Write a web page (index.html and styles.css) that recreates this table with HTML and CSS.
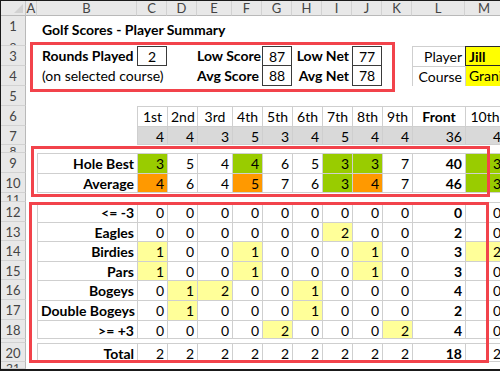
FILE: index.html
```html
<!DOCTYPE html>
<html>
<head>
<meta charset="utf-8">
<title>Golf Scores - Player Summary</title>
<link rel="stylesheet" href="styles.css">
</head>
<body>
<div class="frame">
  <div class="row hdr">
    <div class="corner"></div>
    <div class="ch">A</div><div class="ch">B</div><div class="ch">C</div><div class="ch">D</div><div class="ch">E</div><div class="ch">F</div><div class="ch">G</div><div class="ch">H</div><div class="ch">I</div><div class="ch">J</div><div class="ch">K</div><div class="ch">L</div><div class="ch">M</div>
  </div>

  <div class="row h25">
    <div class="rh">1</div><div></div>
    <div class="c bold title">Golf Scores - Player Summary</div>
  </div>
  <div class="row h5"><div class="rh thin">2</div></div>

  <div class="row h20">
    <div class="rh">3</div><div></div>
    <div class="c bold lft">Rounds Played</div>
    <div class="c ctr box">2</div>
    <div></div>
    <div class="c r bold span2">Low Score</div>
    <div class="c ctr box">87</div>
    <div class="c r bold span2">Low Net</div>
    <div class="c ctr box">77</div>
    <div></div>
    <div class="c r lb">Player</div>
    <div class="c bold jill">Jill</div>
  </div>
  <div class="row h20">
    <div class="rh">4</div><div></div>
    <div class="c lft span2">(on selected course)</div>
    <div></div>
    <div class="c r bold span2">Avg Score</div>
    <div class="c ctr box box2">88</div>
    <div class="c r bold span2">Avg Net</div>
    <div class="c ctr box box2">78</div>
    <div></div>
    <div class="c r lb">Course</div>
    <div class="c course">Granite Ridge</div>
  </div>
  <div class="row h20"><div class="rh">5</div></div>

  <div class="row h20">
    <div class="rh">6</div><div></div><div></div>
    <div class="c ctr b">1st</div><div class="c ctr b">2nd</div><div class="c ctr b">3rd</div><div class="c ctr b">4th</div><div class="c ctr b">5th</div><div class="c ctr b">6th</div><div class="c ctr b">7th</div><div class="c ctr b">8th</div><div class="c ctr b">9th</div><div class="c ctr b bold">Front</div><div class="c ctr b">10th</div>
  </div>
  <div class="row h19">
    <div class="rh">7</div><div></div><div></div>
    <div class="c r b bb p">4</div><div class="c r b bb p">4</div><div class="c r b bb p">3</div><div class="c r b bb p">5</div><div class="c r b bb p">3</div><div class="c r b bb p">4</div><div class="c r b bb p">5</div><div class="c r b bb p">4</div><div class="c r b bb p">4</div><div class="c r b bb p">36</div><div class="c r b bb p">4</div>
  </div>
  <div class="row h8"><div class="rh thin">8</div></div>

  <div class="row h20">
    <div class="rh">9</div><div></div>
    <div class="c r b bold">Hole Best</div>
    <div class="c r b g">3</div><div class="c r b">5</div><div class="c r b">4</div><div class="c r b g">4</div><div class="c r b">6</div><div class="c r b">5</div><div class="c r b g">3</div><div class="c r b g">3</div><div class="c r b">7</div><div class="c r b bold">40</div><div class="c r b g">3</div>
  </div>
  <div class="row h20">
    <div class="rh">10</div><div></div>
    <div class="c r b bb bold">Average</div>
    <div class="c r b bb o">4</div><div class="c r b bb">6</div><div class="c r b bb">4</div><div class="c r b bb o">5</div><div class="c r b bb">7</div><div class="c r b bb">6</div><div class="c r b bb g">3</div><div class="c r b bb o">4</div><div class="c r b bb">7</div><div class="c r b bb bold">46</div><div class="c r b bb g">3</div>
  </div>
  <div class="row h9"><div class="rh thin">11</div></div>

  <div class="row h20">
    <div class="rh">12</div><div></div>
    <div class="c r b bold">&lt;= -3</div>
    <div class="c r b">0</div><div class="c r b">0</div><div class="c r b">0</div><div class="c r b">0</div><div class="c r b">0</div><div class="c r b">0</div><div class="c r b">0</div><div class="c r b">0</div><div class="c r b">0</div><div class="c r b bold">0</div><div class="c r b">0</div>
  </div>
  <div class="row h19">
    <div class="rh">13</div><div></div>
    <div class="c r b bold">Eagles</div>
    <div class="c r b">0</div><div class="c r b">0</div><div class="c r b">0</div><div class="c r b">0</div><div class="c r b">0</div><div class="c r b">0</div><div class="c r b y">2</div><div class="c r b">0</div><div class="c r b">0</div><div class="c r b bold">2</div><div class="c r b">0</div>
  </div>
  <div class="row h20">
    <div class="rh">14</div><div></div>
    <div class="c r b bold">Birdies</div>
    <div class="c r b y">1</div><div class="c r b">0</div><div class="c r b">0</div><div class="c r b y">1</div><div class="c r b">0</div><div class="c r b">0</div><div class="c r b">0</div><div class="c r b y">1</div><div class="c r b">0</div><div class="c r b bold">3</div><div class="c r b y">2</div>
  </div>
  <div class="row h19">
    <div class="rh">15</div><div></div>
    <div class="c r b bold">Pars</div>
    <div class="c r b y">1</div><div class="c r b">0</div><div class="c r b">0</div><div class="c r b y">1</div><div class="c r b">0</div><div class="c r b">0</div><div class="c r b">0</div><div class="c r b y">1</div><div class="c r b">0</div><div class="c r b bold">3</div><div class="c r b">0</div>
  </div>
  <div class="row h20">
    <div class="rh">16</div><div></div>
    <div class="c r b bold">Bogeys</div>
    <div class="c r b">0</div><div class="c r b y">1</div><div class="c r b y">2</div><div class="c r b">0</div><div class="c r b">0</div><div class="c r b y">1</div><div class="c r b">0</div><div class="c r b">0</div><div class="c r b">0</div><div class="c r b bold">4</div><div class="c r b">0</div>
  </div>
  <div class="row h20">
    <div class="rh">17</div><div></div>
    <div class="c r b bold">Double Bogeys</div>
    <div class="c r b">0</div><div class="c r b y">1</div><div class="c r b">0</div><div class="c r b">0</div><div class="c r b">0</div><div class="c r b y">1</div><div class="c r b">0</div><div class="c r b">0</div><div class="c r b">0</div><div class="c r b bold">2</div><div class="c r b">0</div>
  </div>
  <div class="row h19">
    <div class="rh">18</div><div></div>
    <div class="c r b bb bold">&gt;= +3</div>
    <div class="c r b bb">0</div><div class="c r b bb">0</div><div class="c r b bb">0</div><div class="c r b bb">0</div><div class="c r b bb y">2</div><div class="c r b bb">0</div><div class="c r b bb">0</div><div class="c r b bb">0</div><div class="c r b bb y">2</div><div class="c r b bb bold">4</div><div class="c r b bb">0</div>
  </div>
  <div class="row h4"><div class="rh thin"></div></div>
  <div class="row h19">
    <div class="rh">20</div><div></div>
    <div class="c r b bb bold">Total</div>
    <div class="c r b bb">2</div><div class="c r b bb">2</div><div class="c r b bb">2</div><div class="c r b bb">2</div><div class="c r b bb">2</div><div class="c r b bb">2</div><div class="c r b bb">2</div><div class="c r b bb">2</div><div class="c r b bb">2</div><div class="c r b bb bold">18</div><div class="c r b bb">2</div>
  </div>
  <div class="row h7"><div class="rh thin">21</div></div>

  <div class="redbox rb1"></div>
  <div class="redbox rb2"></div>
  <div class="redbox rb3"></div>
</div>
</body>
</html>
```
FILE: styles.css
```css
html, body {
  margin: 0;
  padding: 0;
  background: #ffffff;
  overflow: hidden;
}

body {
  font-family: Lato, "Liberation Sans", sans-serif;
  font-size: 14px;
  color: #000;
}

.frame {
  position: relative;
  width: 499px;
  height: 368px;
  border-top: 1px solid #1a1a1a;
  border-left: 1px solid #1a1a1a;
  border-bottom: 2px solid #1a1a1a;
  overflow: hidden;
}

.row {
  display: grid;
  grid-template-columns: 25px 11px 100px 30px 30px 35px 30px 30px 30px 30px 30px 30px 53px 39px;
  overflow: hidden;
}

.hdr { height: 15px; }
.h25 { height: 25px; line-height: 25px; }
.h20 { height: 20px; line-height: 20px; }
.h19 { height: 19px; line-height: 19px; }
.h9 { height: 9px; }
.h8 { height: 8px; }
.h7 { height: 7px; }
.h5 { height: 5px; }
.h4 { height: 4px; }

.corner {
  position: relative;
  background: #e8e8e8;
  border-right: 1px solid #c6c6c6;
  border-bottom: 1px solid #b9b9b9;
}
.corner::after {
  content: "";
  position: absolute;
  right: 2px;
  bottom: 2px;
  border-left: 9px solid transparent;
  border-bottom: 9px solid #d2d2d2;
}

.ch {
  background: #e8e8e8;
  border-right: 1px solid #d2d2d2;
  border-bottom: 1px solid #b9b9b9;
  text-align: center;
  font-size: 13px;
  line-height: 15px;
  color: #444;
  overflow: hidden;
}

.rh {
  box-sizing: border-box;
  height: 100%;
  background: #e8e8e8;
  border-right: 1px solid #b9b9b9;
  border-bottom: 1px solid #d2d2d2;
  text-align: center;
  font-size: 13px;
  line-height: 20px;
  color: #444;
  overflow: hidden;
}
.rh.thin {
  line-height: 10px;
  font-size: 12px;
  padding-top: 1px;
}

.c {
  box-sizing: border-box;
  padding: 0 3px;
  white-space: nowrap;
  overflow: hidden;
}

.lft { padding-left: 5px; }
.r { text-align: right; }
.ctr { text-align: center; }
.bold { font-weight: 700; }
.span2 {
  grid-column: span 2;
  overflow: visible;
  padding-left: 0;
}
.r.span2 { padding-right: 3px; }
.lft.span2 { padding-left: 5px; }

.title {
  grid-column: 3 / -1;
  padding-left: 5px;
  padding-top: 1px;
  overflow: visible;
}

.box {
  border: 1px solid #3a3a3a;
}
.box2 {
  border-top: none;
}

.lb {
  border-left: 1px solid #cfcfcf;
  border-top: 1px solid #cfcfcf;
}

.jill {
  background: #ffff00;
  border: 1px solid #2a2a2a;
  padding-left: 3px;
}

.course {
  background: #ffff00;
  border-left: 1px solid #cfcfcf;
  padding-left: 3px;
}

.b {
  border-left: 1px solid #cfcfcf;
  border-top: 1px solid #cfcfcf;
}
.bb {
  border-bottom: 1px solid #cfcfcf;
}

.p { background: #d9d9d9; }
.g { background: #99cc00; }
.o { background: #ff9900; }
.y { background: #ffff99; }

.redbox {
  position: absolute;
  box-sizing: border-box;
  border: 3px solid #f2434b;
  pointer-events: none;
}
.rb1 { left: 29px; top: 41px; width: 365px; height: 50px; }
.rb2 { left: 30px; top: 145px; width: 459px; height: 51px; }
.rb3 { left: 28px; top: 201px; width: 460px; height: 161px; }
```
